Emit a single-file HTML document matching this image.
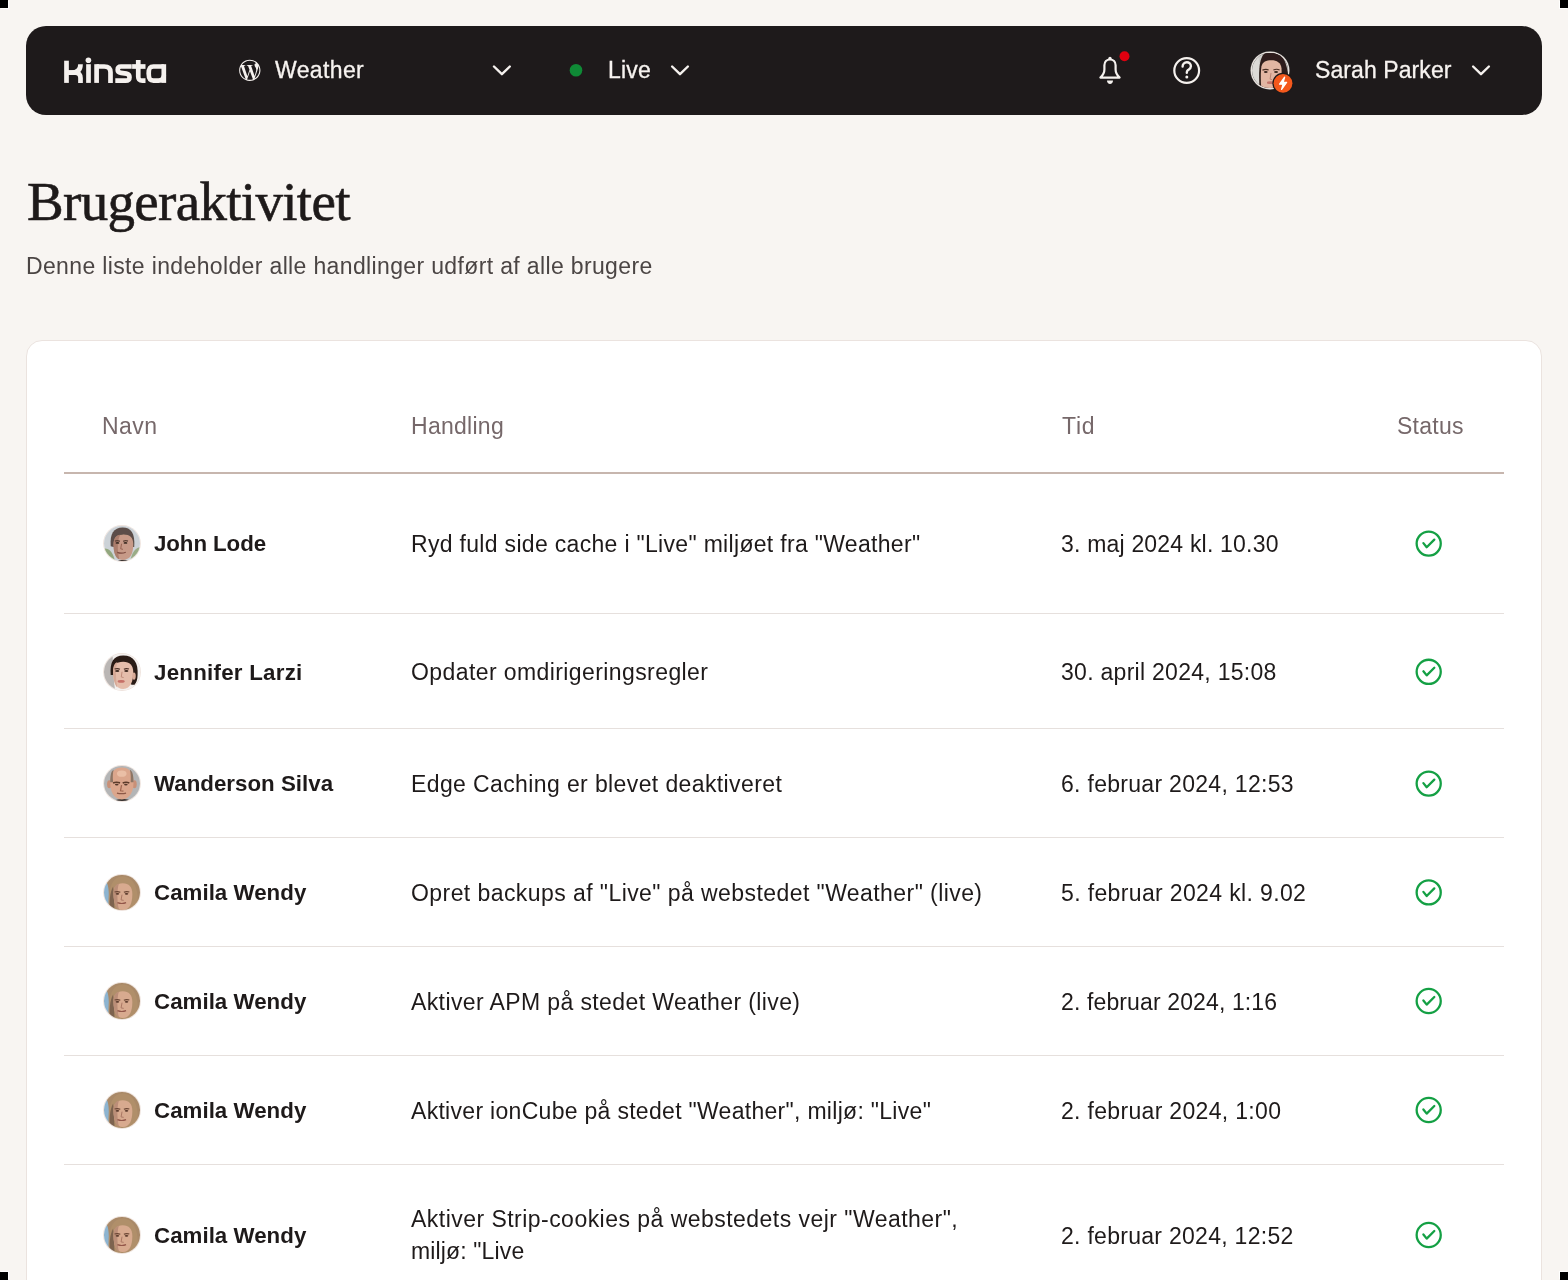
<!DOCTYPE html>
<html><head><meta charset="utf-8">
<style>
html,body{margin:0;padding:0}
body{width:1568px;height:1280px;overflow:hidden;position:relative;background:#f8f5f2;font-family:"Liberation Sans",sans-serif;color:#1e1a1a}
.a{position:absolute;white-space:nowrap;will-change:transform}
.corner{position:absolute;width:8px;height:8px;background:#000;z-index:10}
#nav{position:absolute;left:26px;top:26px;width:1516px;height:89px;background:#1e1a1b;border-radius:20px}
.nt{font-size:23px;line-height:32px;color:#f7f3f0;-webkit-text-stroke:0.3px #f7f3f0}
#card{position:absolute;left:26px;top:340px;width:1514px;height:1100px;background:#fff;border:1px solid #ebe3df;border-radius:16px}
.th{font-size:23px;line-height:32px;color:#76686a}
.hl{position:absolute;left:64px;width:1440px;height:2px;top:472px;background:#c7b6ae}
.sep{position:absolute;left:64px;width:1440px;height:1px;background:#e6e0dd}
.nm{font-size:22.3px;line-height:32px;font-weight:bold;color:#1e1a1a}
.tx{font-size:23px;line-height:32px;color:#1e1a1a}
svg{position:absolute;overflow:visible}
.av{position:absolute;width:35.5px;height:35.5px;border-radius:50%;overflow:hidden;box-shadow:0 0 0 0.9px #efe4de}
.av svg{position:static}
</style></head><body>
<div class="corner" style="left:0;top:0;box-shadow:1px 1px 0 #fff"></div>
<div class="corner" style="right:0;top:0;box-shadow:-1px 1px 0 #fff"></div>
<div class="corner" style="left:0;bottom:0;box-shadow:1px -1px 0 #fff"></div>
<div class="corner" style="right:0;bottom:0;box-shadow:-1px -1px 0 #fff"></div>
<div id="nav"></div>
<svg style="left:0;top:0" width="1568" height="130" viewBox="0 0 1568 130"><g fill="none" stroke="#f5f1ee" stroke-width="4.7">
<path d="M66.5,60.7 V82.9"/>
<path d="M66.5,72.6 H71.5 C77.3,72.6 80.5,70 80.5,64.2"/>
<path d="M66.5,72.6 H75.3 C78.8,72.6 80.5,75 80.5,78 V82.9"/>
<path d="M88.5,64.2 V82.9"/>
<path d="M96.6,82.9 V64.2"/>
<path d="M96.6,66.5 H104.2 C108.6,66.5 110.5,68.6 110.5,72.2 V82.9"/>
<path d="M131.7,66.5 H121 C118.3,66.5 117.7,67.9 117.7,69.7 C117.7,71.6 118.8,72.5 121,72.8 L126.4,73.6 C128.9,74 129.5,75.3 129.5,77.2 C129.5,79.6 128.5,80.6 125.6,80.6 H115.3"/>
<path d="M138.25,59.9 V76.5 C138.25,79.6 139.4,80.6 142.4,80.6 H145.5"/>
<path d="M132.1,66.5 H145.5"/>
<path d="M163.8,66.5 H153.4 C149.6,66.5 148.7,68.4 148.7,73.55 C148.7,78.7 149.6,80.6 153.4,80.6 H158.5 C162.3,80.6 163.8,78.8 163.8,75.5"/>
<path d="M163.8,64.2 V82.9"/>
</g>
<circle cx="88.4" cy="60.3" r="2.8" fill="#f5f1ee"/><g transform="translate(239.15,59.65) scale(0.8875)"><path fill="#f5f1ee" d="M21.469 6.825c.84 1.537 1.318 3.3 1.318 5.175 0 3.979-2.156 7.456-5.363 9.325l3.295-9.527c.615-1.54.82-2.771.82-3.864 0-.405-.026-.78-.07-1.11m-7.981.105c.647-.03 1.232-.105 1.232-.105.582-.075.514-.93-.067-.899 0 0-1.755.135-2.88.135-1.064 0-2.85-.15-2.85-.15-.585-.03-.661.855-.075.885 0 0 .54.061 1.125.09l1.68 4.605-2.37 7.08L5.354 6.9c.649-.03 1.234-.1 1.234-.1.585-.075.516-.93-.065-.896 0 0-1.746.138-2.874.138-.2 0-.438-.008-.69-.015C4.911 3.15 8.235 1.215 12 1.215c2.809 0 5.365 1.072 7.286 2.833-.046-.003-.091-.009-.141-.009-1.06 0-1.812.923-1.812 1.914 0 .89.513 1.643 1.06 2.531.411.72.89 1.643.89 2.977 0 .915-.354 1.994-.821 3.479l-1.075 3.585-3.9-11.61.001.014zM12 22.784c-1.059 0-2.081-.153-3.048-.437l3.237-9.406 3.315 9.087c.024.053.05.101.078.149-1.12.393-2.325.609-3.582.609M1.211 12c0-1.564.336-3.05.935-4.39L7.29 21.709C3.694 19.96 1.212 16.271 1.211 12M12 0C5.385 0 0 5.385 0 12s5.385 12 12 12 12-5.385 12-12S18.615 0 12 0"/></g><path d="M494.00,66.50 L501.90,74.20 L509.80,66.50" fill="none" stroke="#f5f1ee" stroke-width="2.4" stroke-linecap="round" stroke-linejoin="round"/><circle cx="576" cy="70.3" r="6.3" fill="#0f8a36"/><path d="M672.10,66.50 L680.00,74.20 L687.90,66.50" fill="none" stroke="#f5f1ee" stroke-width="2.4" stroke-linecap="round" stroke-linejoin="round"/><path d="M1100.4,77.6 C1102.3,75.8 1104.4,73.5 1104.4,69.5 V65.3 C1104.4,61.8 1106.8,59.5 1110,59.5 C1113.2,59.5 1115.6,61.8 1115.6,65.3 V69.5 C1115.6,73.5 1117.7,75.8 1119.6,77.6 Z" fill="none" stroke="#f5f1ee" stroke-width="2.2" stroke-linejoin="round"/>
<circle cx="1110" cy="58.4" r="1.7" fill="#f5f1ee"/>
<path d="M1107,80.6 H1113 C1113,82.6 1111.7,84 1110,84 C1108.3,84 1107,82.6 1107,80.6Z" fill="#f5f1ee"/>
<circle cx="1124.5" cy="56.2" r="5" fill="#e0000f"/><circle cx="1186.7" cy="70.5" r="12.4" fill="none" stroke="#f5f1ee" stroke-width="2.2"/>
<path d="M1182.6,66.6 C1182.6,64.1 1184.4,62.3 1186.8,62.3 C1189.2,62.3 1190.9,64 1190.9,66.2 C1190.9,68.6 1188.9,69.3 1187.8,70.2 C1187,70.9 1186.8,71.6 1186.8,72.8" fill="none" stroke="#f5f1ee" stroke-width="2.4" stroke-linecap="round"/>
<circle cx="1186.8" cy="76.9" r="1.5" fill="#f5f1ee"/><path d="M1473.10,66.50 L1481.00,74.20 L1488.90,66.50" fill="none" stroke="#f5f1ee" stroke-width="2.4" stroke-linecap="round" stroke-linejoin="round"/></svg>
<div class="a nt" style="left:275.20px;top:53.83px;letter-spacing:0.367px;">Weather</div>
<div class="a nt" style="left:607.80px;top:53.83px;letter-spacing:0.167px;">Live</div>
<div class="a nt" style="left:1315.00px;top:53.83px;letter-spacing:0.082px;">Sarah Parker</div>
<div class="av" style="left:1252.40px;top:52.70px;width:35.2px;height:35.2px;box-shadow:0 0 0 1.5px #e6e0dc"><svg width="35.2" height="35.2" viewBox="0 0 37 37"><defs><filter id="bl" x="-10%" y="-10%" width="120%" height="120%"><feGaussianBlur stdDeviation="0.45"/></filter></defs><g filter="url(#bl)"><rect x="-2" y="-2" width="41" height="41" fill="#cfcdca"/><path d="M-2,-2 H6 C8,10 8,25 9,40 H-2Z" fill="#dcdad7"/><path d="M8,40 C7,20 6,-2 20,-2 C33,-2 39,12 39,40 Z" fill="#2e1f1a"/><path d="M10,40 C9,30 9,20 10,14 C11,9 15,7.5 20.5,7.5 C26,7.5 30.5,10 31,16 C31.5,24 31,32 29,40Z" fill="#e2b6a3"/><path d="M11,18 Q14.5,16.6 17.5,17.8 M22.5,17.8 Q26,16.4 29,17.8" stroke="#4a2e24" stroke-width="1.2" fill="none"/><ellipse cx="14.5" cy="20" rx="2" ry="1.1" fill="#3a2820"/><ellipse cx="25.3" cy="20" rx="2.1" ry="1.1" fill="#3a2820"/><path d="M20,21 L19,27.5 L21.2,28" stroke="#b98472" stroke-width="1" fill="none"/><ellipse cx="19.5" cy="31.2" rx="3.8" ry="1.5" fill="#c2736a"/></g></svg></div>
<svg style="left:0;top:0" width="1568" height="130" viewBox="0 0 1568 130"><circle cx="1283" cy="83.3" r="10.6" fill="#1e1a1b"/><circle cx="1283" cy="83.3" r="9.4" fill="#f4581c"/>
<path d="M1284.6,77.2 L1279.6,84.2 H1283.1 L1281.6,89.4 L1286.6,82.4 H1283.1 Z" fill="#fff" stroke="#fff" stroke-width="1.3" stroke-linejoin="round"/></svg>
<div class="a" style="left:26.7px;top:172.14px;font-family:'Liberation Serif',serif;font-size:55px;line-height:60px;color:#1e1a1a;letter-spacing:-0.68px;-webkit-text-stroke:0.6px #1e1a1a">Brugeraktivitet</div>
<div class="a " style="left:25.60px;top:249.63px;letter-spacing:0.357px;font-size:23px;line-height:32px;color:#4b4544">Denne liste indeholder alle handlinger udført af alle brugere</div>
<div id="card"></div>
<div class="a th" style="left:101.80px;top:409.63px;letter-spacing:0.417px;">Navn</div>
<div class="a th" style="left:411.20px;top:409.63px;letter-spacing:0.271px;">Handling</div>
<div class="a th" style="left:1061.50px;top:409.63px;letter-spacing:0.700px;">Tid</div>
<div class="a th" style="left:1397.00px;top:409.63px;letter-spacing:0.260px;">Status</div>
<div class="hl"></div>
<div class="sep" style="top:613px"></div>
<div class="sep" style="top:728px"></div>
<div class="sep" style="top:837px"></div>
<div class="sep" style="top:946px"></div>
<div class="sep" style="top:1055px"></div>
<div class="sep" style="top:1164px"></div>
<div class="av" style="left:104.15px;top:525.85px"><svg width="35.5" height="35.5" viewBox="0 0 37 37"><defs><filter id="bl" x="-10%" y="-10%" width="120%" height="120%"><feGaussianBlur stdDeviation="0.45"/></filter></defs><g filter="url(#bl)"><rect x="-2" y="-2" width="41" height="41" fill="#ccd2d7"/><path d="M-2,24 C4,22 10,26 12,40 H-2Z" fill="#92a77e"/><path d="M39,22 C33,22 28,28 27,40 H39Z" fill="#9aac86"/><path d="M11,40 C13,34 27,33 30,40Z" fill="#3c3530"/><path d="M7,21 C6,8 10,1.5 19.5,1.5 C28,1.5 32.5,7 31.5,22 L29,22 L10,22Z" fill="#5b4e48"/><path d="M10,20 C10,13 12,9.5 19,9 C26,8.5 30.5,11 30.5,19 C30.5,28 28,35 20,35.5 C13,35.5 10,29 10,20Z" fill="#c79a88"/><path d="M10,20 C10,13 12,9.5 17,9.2 C14,14 13.5,25 16,35 C12,33 10,28 10,20Z" fill="#ab7d6c"/><path d="M11.5,15.8 Q14,14.8 16.5,16 M20,16 Q22.5,14.8 25,15.8" stroke="#5a4036" stroke-width="1.3" fill="none"/><ellipse cx="14" cy="17.6" rx="2" ry="1" fill="#3e2c24"/><ellipse cx="22.4" cy="17.6" rx="2" ry="1" fill="#3e2c24"/><path d="M18.3,18.5 L17.4,23.8 L19.8,24.3" stroke="#94604f" stroke-width="1" fill="none"/><path d="M13.8,27.5 Q18,29.2 22.7,27.4" stroke="#7e4c42" stroke-width="1.2" fill="none"/></g></svg></div>
<div class="a nm" style="left:153.60px;top:528.37px;letter-spacing:-0.075px;">John Lode</div>
<div class="a tx" style="left:411.00px;top:528.13px;letter-spacing:0.314px;">Ryd fuld side cache i "Live" miljøet fra "Weather"</div>
<div class="a tx" style="left:1061.00px;top:528.13px;letter-spacing:0.195px;">3. maj 2024 kl. 10.30</div>
<div class="av" style="left:104.15px;top:654.05px"><svg width="35.5" height="35.5" viewBox="0 0 37 37"><defs><filter id="bl" x="-10%" y="-10%" width="120%" height="120%"><feGaussianBlur stdDeviation="0.45"/></filter></defs><g filter="url(#bl)"><rect x="-2" y="-2" width="41" height="41" fill="#f3f0ee"/><path d="M-2,-2 H9 C9,12 10,28 12,40 H-2Z" fill="#bab6b4"/><path d="M7,22 C6,8 10,1.5 20,1.5 C31,1.5 36,9 35,22 C35,27 33.5,30 32,32 L29,32 L10,22Z" fill="#2a1a15"/><path d="M9.5,19 C9.5,12 12,8 20,8 C27,8 30.5,12 30.5,19 C30.5,28 28,36 20,36.5 C12.5,36.5 9.5,28 9.5,19Z" fill="#e5bdab"/><path d="M9.5,19 C9.5,12 11,9 14,8.5 C12,14 12,26 14,35 C11,32 9.5,26 9.5,19Z" fill="#d6a996"/><path d="M11,15.7 Q14,14.6 16.6,15.8 M20.7,15.8 Q23.5,14.6 26,15.7" stroke="#4a2e26" stroke-width="1.2" fill="none"/><ellipse cx="13.8" cy="17.7" rx="2.2" ry="1.1" fill="#3f2a22"/><ellipse cx="23.3" cy="17.7" rx="2.2" ry="1.1" fill="#3f2a22"/><path d="M18.8,18.5 L18,24 L20.5,24.5" stroke="#be8a78" stroke-width="1" fill="none"/><ellipse cx="17.9" cy="28.6" rx="3.7" ry="1.4" fill="#c66f67"/><ellipse cx="31.3" cy="23" rx="1.8" ry="3.8" fill="#d9ab98"/></g></svg></div>
<div class="a nm" style="left:153.60px;top:656.57px;letter-spacing:0.254px;">Jennifer Larzi</div>
<div class="a tx" style="left:411.00px;top:656.33px;letter-spacing:0.408px;">Opdater omdirigeringsregler</div>
<div class="a tx" style="left:1061.00px;top:656.33px;letter-spacing:0.280px;">30. april 2024, 15:08</div>
<div class="av" style="left:104.15px;top:765.85px"><svg width="35.5" height="35.5" viewBox="0 0 37 37"><defs><filter id="bl" x="-10%" y="-10%" width="120%" height="120%"><feGaussianBlur stdDeviation="0.45"/></filter></defs><g filter="url(#bl)"><rect x="-2" y="-2" width="41" height="41" fill="#b4b5b6"/><path d="M7,40 C9,33 29,32 31,40Z" fill="#3b3431"/><ellipse cx="5.5" cy="19" rx="2.3" ry="4.2" fill="#c99077"/><ellipse cx="31.8" cy="19" rx="2.3" ry="4.2" fill="#c99077"/><path d="M6.5,17 C6.5,6 11,1.5 18.5,1.5 C26,1.5 30.8,6 30.8,17 C30.8,27 27,34.5 18.5,35 C10,34.5 6.5,27 6.5,17Z" fill="#dba68c"/><path d="M6.5,17 C6.5,8 8,5 10,4 C9,8 9,12 9.5,17Z M30.8,17 C30.8,8 29,5 27,4 C28,8 28,12 27.8,17Z" fill="#8c7565"/><ellipse cx="18.5" cy="8" rx="5" ry="3.2" fill="#eabfa6"/><path d="M9.5,17.6 Q13,16.2 16.7,17.6 M19.5,17.6 Q23,16.2 26.4,17.6" stroke="#5c3a2a" stroke-width="1.7" fill="none"/><ellipse cx="13.3" cy="19.4" rx="1.9" ry="0.9" fill="#55382c"/><ellipse cx="22.8" cy="19.4" rx="1.9" ry="0.9" fill="#55382c"/><path d="M18.3,20 L17.2,25.8 L20.3,26.2" stroke="#a06650" stroke-width="1.3" fill="none"/><path d="M13.5,28.3 Q18.3,29.4 23,28.3" stroke="#8c5846" stroke-width="1.3" fill="none"/></g></svg></div>
<div class="a nm" style="left:153.60px;top:768.37px;letter-spacing:0.021px;">Wanderson Silva</div>
<div class="a tx" style="left:411.00px;top:768.13px;letter-spacing:0.388px;">Edge Caching er blevet deaktiveret</div>
<div class="a tx" style="left:1061.00px;top:768.13px;letter-spacing:0.295px;">6. februar 2024, 12:53</div>
<div class="av" style="left:104.15px;top:874.65px"><svg width="35.5" height="35.5" viewBox="0 0 37 37"><defs><filter id="bl" x="-10%" y="-10%" width="120%" height="120%"><feGaussianBlur stdDeviation="0.45"/></filter></defs><g filter="url(#bl)"><rect x="-2" y="-2" width="41" height="41" fill="#a98967"/><path d="M-2,4 C3,4 5,12 5,20 C5,28 6,34 8,40 H-2Z" fill="#8db4d0"/><path d="M5.5,40 C3,22 6,1.5 19,1.5 C32,1.5 37,15 35,40 Z" fill="#b08f6b"/><path d="M6.5,36 C5,30 6,18 9.5,12 L11,36Z" fill="#7d6350"/><path d="M10,20 C10,12.5 13,8.7 19.5,8.7 C26,8.7 29.5,12.5 29.5,20 C29.5,29 27,36.5 19.5,36.5 C13,36.5 10,29 10,20Z" fill="#d8aa8f"/><path d="M10,20 C10,13 12,9.5 15.5,9 C13.5,15 13.5,26 15.5,36 C12,34 10,28 10,20Z" fill="#bb8e78"/><path d="M11,17.8 Q14,16.8 17,18 M20.7,18 Q23.5,16.8 26.4,17.8" stroke="#6a4634" stroke-width="1.1" fill="none"/><ellipse cx="14" cy="19.6" rx="1.9" ry="0.95" fill="#5a3a2c"/><ellipse cx="23.5" cy="19.6" rx="1.9" ry="0.95" fill="#5a3a2c"/><path d="M18.8,20.5 L17.8,26 L20.5,26.4" stroke="#a87562" stroke-width="1" fill="none"/><path d="M14,28.8 Q18.5,30.6 23,28.8" stroke="#92564a" stroke-width="1.2" fill="none"/></g></svg></div>
<div class="a nm" style="left:153.60px;top:877.17px;letter-spacing:0.027px;">Camila Wendy</div>
<div class="a tx" style="left:411.00px;top:876.93px;letter-spacing:0.429px;">Opret backups af "Live" på webstedet "Weather" (live)</div>
<div class="a tx" style="left:1061.00px;top:876.93px;letter-spacing:0.361px;">5. februar 2024 kl. 9.02</div>
<div class="av" style="left:104.15px;top:983.25px"><svg width="35.5" height="35.5" viewBox="0 0 37 37"><defs><filter id="bl" x="-10%" y="-10%" width="120%" height="120%"><feGaussianBlur stdDeviation="0.45"/></filter></defs><g filter="url(#bl)"><rect x="-2" y="-2" width="41" height="41" fill="#a98967"/><path d="M-2,4 C3,4 5,12 5,20 C5,28 6,34 8,40 H-2Z" fill="#8db4d0"/><path d="M5.5,40 C3,22 6,1.5 19,1.5 C32,1.5 37,15 35,40 Z" fill="#b08f6b"/><path d="M6.5,36 C5,30 6,18 9.5,12 L11,36Z" fill="#7d6350"/><path d="M10,20 C10,12.5 13,8.7 19.5,8.7 C26,8.7 29.5,12.5 29.5,20 C29.5,29 27,36.5 19.5,36.5 C13,36.5 10,29 10,20Z" fill="#d8aa8f"/><path d="M10,20 C10,13 12,9.5 15.5,9 C13.5,15 13.5,26 15.5,36 C12,34 10,28 10,20Z" fill="#bb8e78"/><path d="M11,17.8 Q14,16.8 17,18 M20.7,18 Q23.5,16.8 26.4,17.8" stroke="#6a4634" stroke-width="1.1" fill="none"/><ellipse cx="14" cy="19.6" rx="1.9" ry="0.95" fill="#5a3a2c"/><ellipse cx="23.5" cy="19.6" rx="1.9" ry="0.95" fill="#5a3a2c"/><path d="M18.8,20.5 L17.8,26 L20.5,26.4" stroke="#a87562" stroke-width="1" fill="none"/><path d="M14,28.8 Q18.5,30.6 23,28.8" stroke="#92564a" stroke-width="1.2" fill="none"/></g></svg></div>
<div class="a nm" style="left:153.60px;top:985.77px;letter-spacing:0.027px;">Camila Wendy</div>
<div class="a tx" style="left:411.00px;top:985.53px;letter-spacing:0.389px;">Aktiver APM på stedet Weather (live)</div>
<div class="a tx" style="left:1061.00px;top:985.53px;letter-spacing:0.125px;">2. februar 2024, 1:16</div>
<div class="av" style="left:104.15px;top:1092.25px"><svg width="35.5" height="35.5" viewBox="0 0 37 37"><defs><filter id="bl" x="-10%" y="-10%" width="120%" height="120%"><feGaussianBlur stdDeviation="0.45"/></filter></defs><g filter="url(#bl)"><rect x="-2" y="-2" width="41" height="41" fill="#a98967"/><path d="M-2,4 C3,4 5,12 5,20 C5,28 6,34 8,40 H-2Z" fill="#8db4d0"/><path d="M5.5,40 C3,22 6,1.5 19,1.5 C32,1.5 37,15 35,40 Z" fill="#b08f6b"/><path d="M6.5,36 C5,30 6,18 9.5,12 L11,36Z" fill="#7d6350"/><path d="M10,20 C10,12.5 13,8.7 19.5,8.7 C26,8.7 29.5,12.5 29.5,20 C29.5,29 27,36.5 19.5,36.5 C13,36.5 10,29 10,20Z" fill="#d8aa8f"/><path d="M10,20 C10,13 12,9.5 15.5,9 C13.5,15 13.5,26 15.5,36 C12,34 10,28 10,20Z" fill="#bb8e78"/><path d="M11,17.8 Q14,16.8 17,18 M20.7,18 Q23.5,16.8 26.4,17.8" stroke="#6a4634" stroke-width="1.1" fill="none"/><ellipse cx="14" cy="19.6" rx="1.9" ry="0.95" fill="#5a3a2c"/><ellipse cx="23.5" cy="19.6" rx="1.9" ry="0.95" fill="#5a3a2c"/><path d="M18.8,20.5 L17.8,26 L20.5,26.4" stroke="#a87562" stroke-width="1" fill="none"/><path d="M14,28.8 Q18.5,30.6 23,28.8" stroke="#92564a" stroke-width="1.2" fill="none"/></g></svg></div>
<div class="a nm" style="left:153.60px;top:1094.77px;letter-spacing:0.027px;">Camila Wendy</div>
<div class="a tx" style="left:411.00px;top:1094.53px;letter-spacing:0.298px;">Aktiver ionCube på stedet "Weather", miljø: "Live"</div>
<div class="a tx" style="left:1061.00px;top:1094.53px;letter-spacing:0.320px;">2. februar 2024, 1:00</div>
<div class="av" style="left:104.15px;top:1217.25px"><svg width="35.5" height="35.5" viewBox="0 0 37 37"><defs><filter id="bl" x="-10%" y="-10%" width="120%" height="120%"><feGaussianBlur stdDeviation="0.45"/></filter></defs><g filter="url(#bl)"><rect x="-2" y="-2" width="41" height="41" fill="#a98967"/><path d="M-2,4 C3,4 5,12 5,20 C5,28 6,34 8,40 H-2Z" fill="#8db4d0"/><path d="M5.5,40 C3,22 6,1.5 19,1.5 C32,1.5 37,15 35,40 Z" fill="#b08f6b"/><path d="M6.5,36 C5,30 6,18 9.5,12 L11,36Z" fill="#7d6350"/><path d="M10,20 C10,12.5 13,8.7 19.5,8.7 C26,8.7 29.5,12.5 29.5,20 C29.5,29 27,36.5 19.5,36.5 C13,36.5 10,29 10,20Z" fill="#d8aa8f"/><path d="M10,20 C10,13 12,9.5 15.5,9 C13.5,15 13.5,26 15.5,36 C12,34 10,28 10,20Z" fill="#bb8e78"/><path d="M11,17.8 Q14,16.8 17,18 M20.7,18 Q23.5,16.8 26.4,17.8" stroke="#6a4634" stroke-width="1.1" fill="none"/><ellipse cx="14" cy="19.6" rx="1.9" ry="0.95" fill="#5a3a2c"/><ellipse cx="23.5" cy="19.6" rx="1.9" ry="0.95" fill="#5a3a2c"/><path d="M18.8,20.5 L17.8,26 L20.5,26.4" stroke="#a87562" stroke-width="1" fill="none"/><path d="M14,28.8 Q18.5,30.6 23,28.8" stroke="#92564a" stroke-width="1.2" fill="none"/></g></svg></div>
<div class="a nm" style="left:153.60px;top:1219.77px;letter-spacing:0.027px;">Camila Wendy</div>
<div class="a tx" style="left:411.00px;top:1203.13px;letter-spacing:0.466px;">Aktiver Strip-cookies på webstedets vejr "Weather",</div>
<div class="a tx" style="left:411.00px;top:1235.33px;letter-spacing:0.136px;">miljø: "Live</div>
<div class="a tx" style="left:1061.00px;top:1219.53px;letter-spacing:0.281px;">2. februar 2024, 12:52</div>
<svg style="left:0;top:0" width="1568" height="1280" viewBox="0 0 1568 1280"><circle cx="1428.7" cy="543.6" r="12.05" fill="none" stroke="#14a044" stroke-width="2.3"/><path d="M1423.40,543.10 L1426.70,547.20 L1434.30,539.60" fill="none" stroke="#14a044" stroke-width="2.3" stroke-linecap="round" stroke-linejoin="round"/><circle cx="1428.7" cy="671.8" r="12.05" fill="none" stroke="#14a044" stroke-width="2.3"/><path d="M1423.40,671.30 L1426.70,675.40 L1434.30,667.80" fill="none" stroke="#14a044" stroke-width="2.3" stroke-linecap="round" stroke-linejoin="round"/><circle cx="1428.7" cy="783.6" r="12.05" fill="none" stroke="#14a044" stroke-width="2.3"/><path d="M1423.40,783.10 L1426.70,787.20 L1434.30,779.60" fill="none" stroke="#14a044" stroke-width="2.3" stroke-linecap="round" stroke-linejoin="round"/><circle cx="1428.7" cy="892.4" r="12.05" fill="none" stroke="#14a044" stroke-width="2.3"/><path d="M1423.40,891.90 L1426.70,896.00 L1434.30,888.40" fill="none" stroke="#14a044" stroke-width="2.3" stroke-linecap="round" stroke-linejoin="round"/><circle cx="1428.7" cy="1001.0" r="12.05" fill="none" stroke="#14a044" stroke-width="2.3"/><path d="M1423.40,1000.50 L1426.70,1004.60 L1434.30,997.00" fill="none" stroke="#14a044" stroke-width="2.3" stroke-linecap="round" stroke-linejoin="round"/><circle cx="1428.7" cy="1110.0" r="12.05" fill="none" stroke="#14a044" stroke-width="2.3"/><path d="M1423.40,1109.50 L1426.70,1113.60 L1434.30,1106.00" fill="none" stroke="#14a044" stroke-width="2.3" stroke-linecap="round" stroke-linejoin="round"/><circle cx="1428.7" cy="1235.0" r="12.05" fill="none" stroke="#14a044" stroke-width="2.3"/><path d="M1423.40,1234.50 L1426.70,1238.60 L1434.30,1231.00" fill="none" stroke="#14a044" stroke-width="2.3" stroke-linecap="round" stroke-linejoin="round"/></svg>
</body></html>
